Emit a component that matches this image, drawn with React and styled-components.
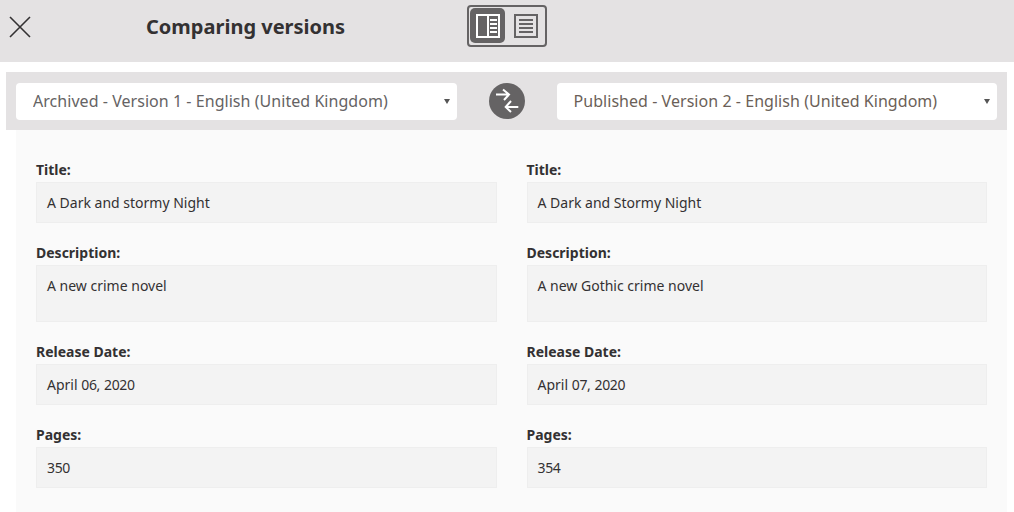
import React from 'react';
import styled, { createGlobalStyle } from 'styled-components';

const GlobalStyle = createGlobalStyle`
  html, body {
    margin: 0;
    padding: 0;
    background: #fff;
    overflow: hidden;
  }
  body {
    font-family: "Noto Sans", sans-serif;
    color: #333132;
  }
`;

const Page = styled.div`
  width: 1014px;
  height: 512px;
  overflow: hidden;
`;

const Header = styled.header`
  height: 62px;
  box-sizing: border-box;
  padding-bottom: 10px;
  background: #e4e2e3;
  display: flex;
  align-items: center;
`;

const CloseButton = styled.button`
  width: 40px;
  height: 40px;
  margin-top: 1px;
  padding: 0;
  border: none;
  background: none;
  display: flex;
  align-items: center;
  justify-content: center;
  svg { display: block; }
`;

const Heading = styled.h1`
  margin: 0 0 0 106px;
  width: 321px;
  font-size: 20px;
  line-height: 27px;
  font-weight: 700;
  color: #333132;
`;

const ViewToggle = styled.div`
  width: 80px;
  height: 42px;
  box-sizing: border-box;
  border: 2px solid #656364;
  border-radius: 4px;
  padding: 1px;
  display: flex;
  gap: 3px;
`;

const ViewButton = styled.button`
  width: ${p => (p.$active ? 35 : 36)}px;
  height: 35px;
  padding: 0;
  border: none;
  border-radius: 5px;
  background: ${p => (p.$active ? '#656364' : 'transparent')};
  display: flex;
  align-items: center;
  justify-content: center;
`;

const VersionBar = styled.div`
  margin: 10px 7px 0 6px;
  height: 58px;
  background: #e4e2e3;
  display: grid;
  grid-template-columns: 1fr 100px 1fr;
  align-items: center;
  padding: 0 10px;
`;

const SelectWrap = styled.div`
  position: relative;
`;

const VersionSelect = styled.select`
  display: block;
  width: 100%;
  height: 37px;
  box-sizing: border-box;
  appearance: none;
  background-color: #fff;
  border: none;
  border-radius: 4px;
  padding: 0 20px 0 17px;
  font-family: "Noto Sans", sans-serif;
  font-size: 16px;
  letter-spacing: 0.045px;
  color: ${p => p.$tone};
`;

const Caret = styled.span`
  position: absolute;
  top: 16px;
  right: 7px;
  width: 0;
  height: 0;
  border-left: 3px solid transparent;
  border-right: 3px solid transparent;
  border-top: 5px solid #555;
  pointer-events: none;
`;

const SwapSlot = styled.div`
  display: flex;
  justify-content: center;
`;

const SwapButton = styled.button`
  width: 36px;
  height: 36px;
  padding: 0;
  border: none;
  border-radius: 50%;
  background: #656364;
  display: flex;
  align-items: center;
  justify-content: center;
`;

const Compare = styled.main`
  margin: 0 7px 0 16px;
  height: 382px;
  background: #fafafa;
  padding: 30px 20px 0;
  box-sizing: border-box;
  display: grid;
  grid-template-columns: 1fr 1fr;
  column-gap: 30px;
`;

const Column = styled.section`
  display: flex;
  flex-direction: column;
`;

const Label = styled.div`
  font-size: 14px;
  line-height: 20px;
  font-weight: 700;
  color: #333132;
  margin-bottom: 2px;
`;

const Value = styled.div`
  box-sizing: border-box;
  height: ${p => p.$h || 41}px;
  margin-bottom: 20px;
  padding: 10px;
  font-size: 14px;
  line-height: 20px;
  color: #333132;
  background: #f3f3f3;
  border: 1px solid #eeeeee;
`;

// digits sit a little tighter than the font's default advance
const Digits = styled.span`
  letter-spacing: -0.33px;
`;

const versions = [
  {
    select: 'Archived - Version 1 - English (United Kingdom)',
    tone: '#656364',
    fields: [
      ['Title:', 'A Dark and stormy Night'],
      ['Description:', 'A new crime novel', 57],
      ['Release Date:', 'April 06, 2020'],
      ['Pages:', '350'],
    ],
  },
  {
    select: 'Published - Version 2 - English (United Kingdom)',
    tone: '#6b5f58',
    fields: [
      ['Title:', 'A Dark and Stormy Night'],
      ['Description:', 'A new Gothic crime novel', 57],
      ['Release Date:', 'April 07, 2020'],
      ['Pages:', '354'],
    ],
  },
];

const withDigits = text =>
  text.split(/(\d+)/).map((part, i) => (i % 2 ? <Digits key={i}>{part}</Digits> : part));

const CloseIcon = () => (
  <svg width="22" height="22" viewBox="0 0 22 22" fill="none" stroke="#333132" strokeWidth="1.6">
    <path d="M1 1l20 20M21 1L1 21" />
  </svg>
);

const SplitIcon = () => (
  <svg width="24" height="24" viewBox="0 0 24 24" fill="none" stroke="#fff">
    <rect x="1" y="1" width="22" height="22" strokeWidth="2" />
    <path d="M12 1v22" strokeWidth="2" />
    <path d="M14 6h7M14 10h7M14 14h7M14 18h7" strokeWidth="2" />
  </svg>
);

const FullIcon = () => (
  <svg width="24" height="24" viewBox="0 0 24 24" fill="none" stroke="#656364">
    <rect x="1" y="1" width="22" height="22" strokeWidth="2" />
    <path d="M5 6h14M5 10h14M5 14h14M5 18h14" strokeWidth="2" />
  </svg>
);

const SwapIcon = () => (
  <svg width="28" height="28" viewBox="0 0 28 28" fill="none" stroke="#fff" strokeWidth="2">
    <path d="M3 7.5h13M10 2.5l6 5-5 5.5" />
    <path d="M25.3 20H12.7M18 14l-5.3 6 5.3 5" />
  </svg>
);

const VersionPicker = ({ version }) => (
  <SelectWrap>
    <VersionSelect $tone={version.tone} defaultValue={version.select}>
      <option>{version.select}</option>
    </VersionSelect>
    <Caret />
  </SelectWrap>
);

export default function App() {
  return (
    <Page>
      <GlobalStyle />
      <Header>
        <CloseButton><CloseIcon /></CloseButton>
        <Heading>Comparing versions</Heading>
        <ViewToggle>
          <ViewButton $active><SplitIcon /></ViewButton>
          <ViewButton><FullIcon /></ViewButton>
        </ViewToggle>
      </Header>
      <VersionBar>
        <VersionPicker version={versions[0]} />
        <SwapSlot><SwapButton><SwapIcon /></SwapButton></SwapSlot>
        <VersionPicker version={versions[1]} />
      </VersionBar>
      <Compare>
        {versions.map(v => (
          <Column key={v.select}>
            {v.fields.map(([label, value, h]) => (
              <div key={label}>
                <Label>{label}</Label>
                <Value $h={h}>{withDigits(value)}</Value>
              </div>
            ))}
          </Column>
        ))}
      </Compare>
    </Page>
  );
}
